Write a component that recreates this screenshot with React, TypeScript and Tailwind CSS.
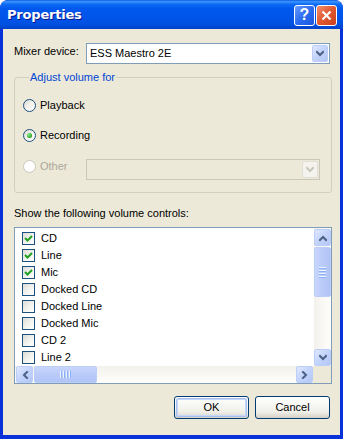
import React from "react";

const Chevron = ({ dir, color = "#4d6185" }: { dir: "up" | "down" | "left" | "right"; color?: string }) => {
  const pts: Record<string, string> = {
    down: "1,2 4,5 7,2",
    up: "1,6 4,3 7,6",
    left: "6,1 3,4 6,7",
    right: "2,1 5,4 2,7",
  };
  return (
    <svg width="8" height="8" viewBox="0 0 8 8">
      <polyline points={pts[dir]} fill="none" stroke={color} strokeWidth="2" strokeLinecap="square" />
    </svg>
  );
};

const ScrollBtn = ({ dir, w = 17, h = 17 }: { dir: "up" | "down" | "left" | "right"; w?: number; h?: number }) => (
  <div
    className="flex items-center justify-center rounded-[2px] border border-[#bccdf7] bg-[linear-gradient(135deg,#dfe8fe,#c2d3fc_50%,#b4c8f6)] shrink-0"
    style={{ width: w, height: h }}
  >
    <Chevron dir={dir} />
  </div>
);

const ComboBtn = ({ disabled }: { disabled?: boolean }) => (
  <div
    className={
      disabled
        ? "w-[16px] h-[17px] rounded-[2px] border border-[#e2e0d6] bg-[#f4f3ee] flex items-center justify-center"
        : "w-[16px] h-[17px] rounded-[2px] border border-[#bccdf7] bg-[linear-gradient(135deg,#dfe8fe,#c2d3fc_50%,#b4c8f6)] flex items-center justify-center"
    }
  >
    <Chevron dir="down" color={disabled ? "#c9c7ba" : "#4d6185"} />
  </div>
);

const Radio = ({ checked, disabled }: { checked?: boolean; disabled?: boolean }) => (
  <div
    className={
      disabled
        ? "w-[13px] h-[13px] rounded-full border border-[#cac8bb] bg-white flex items-center justify-center shrink-0"
        : "w-[13px] h-[13px] rounded-full border border-[#1c5180] bg-[linear-gradient(135deg,#dcd9cf,#f4f3ee_50%,#ffffff)] flex items-center justify-center shrink-0"
    }
  >
    {checked && <div className="w-[5px] h-[5px] rounded-full bg-[radial-gradient(circle_at_35%_35%,#8ef08e,#21a121_70%)]" />}
  </div>
);

const Check = ({ checked }: { checked?: boolean }) => (
  <div className="w-[13px] h-[13px] border border-[#1c5180] bg-[linear-gradient(135deg,#dcdcd7,#f5f5f2_60%,#ffffff)] flex items-center justify-center shrink-0">
    {checked && (
      <svg width="9" height="9" viewBox="0 0 9 9">
        <polyline points="1,4 3.5,6.5 8,2" fill="none" stroke="#21a121" strokeWidth="2" />
      </svg>
    )}
  </div>
);

const items: [string, boolean][] = [
  ["CD", true],
  ["Line", true],
  ["Mic", true],
  ["Docked CD", false],
  ["Docked Line", false],
  ["Docked Mic", false],
  ["CD 2", false],
  ["Line 2", false],
];

const Grip = ({ vertical }: { vertical?: boolean }) => (
  <div className={vertical ? "flex flex-col gap-[1px]" : "flex flex-row gap-[1px]"}>
    {[0, 1, 2, 3].map((i) => (
      <div key={i} className={vertical ? "w-[7px] h-[1px] bg-[#eef4fe] border-b border-[#8cb0f8] box-content" : "h-[7px] w-[1px] bg-[#eef4fe] border-r border-[#8cb0f8] box-content"} />
    ))}
  </div>
);

export default function App() {
  return (
    <div
      className="w-[343px] h-[439px] flex flex-col bg-[#0831d9] rounded-t-[8px] overflow-hidden text-[11px] text-black"
      style={{ fontFamily: '"Liberation Sans", Arial, sans-serif' }}
    >
      {/* Title bar */}
      <div className="h-[29px] shrink-0 flex items-center pl-[7px] pr-[6px] rounded-t-[8px] bg-[linear-gradient(to_bottom,#0a5ee0_0%,#3d95ff_6%,#0d6cf5_14%,#0058ee_30%,#0054e9_60%,#0050e0_85%,#0040c8_100%)]">
        <div
          className="flex-1 text-white font-bold text-[13px] [text-shadow:1px_1px_0_#0a1890]"
          style={{ fontFamily: '"DejaVu Sans", "Liberation Sans", sans-serif', letterSpacing: "-0.2px" }}
        >
          Properties
        </div>
        <div className="flex gap-[1px] mt-[1px]">
          <div className="w-[21px] h-[21px] rounded-[3px] border border-white bg-[linear-gradient(135deg,#6b9cff,#2a6cf0_50%,#1a56e0)] flex items-center justify-center text-white font-bold text-[16px] leading-none">
            ?
          </div>
          <div className="w-[21px] h-[21px] rounded-[3px] border border-white bg-[linear-gradient(135deg,#f0906e,#e0582e_50%,#c8401c)] flex items-center justify-center">
            <svg width="11" height="11" viewBox="0 0 11 11">
              <path d="M1.5 1.5 L9.5 9.5 M9.5 1.5 L1.5 9.5" stroke="white" strokeWidth="2.2" />
            </svg>
          </div>
        </div>
      </div>

      {/* Body */}
      <div className="flex-1 mx-[3px] mb-[4px] bg-[#ece9d8] pl-[11px] pr-[8px] flex flex-col">
        {/* Mixer row */}
        <div className="flex items-center mt-[14px] h-[21px]">
          <div className="w-[72px] -mt-[4px]">Mixer device:</div>
          <div className="flex-1 mr-[2px] h-[21px] bg-white border border-[#7f9db9] flex items-center pl-[3px] pr-[1px]">
            <div className="flex-1">ESS Maestro 2E</div>
            <ComboBtn />
          </div>
        </div>

        {/* Group */}
        <fieldset className="mt-[7px] border border-[#d0d0bf] rounded-[3px] pl-[8px] pr-[11px] pb-[12px]">
          <legend className="ml-[6px] px-[1px] text-[#0046d5] leading-[13px]">Adjust volume for</legend>
          <div className="flex flex-col gap-[17px] pt-[15px]">
            <div className="flex items-center gap-[4px] h-[13px]">
              <Radio />
              <span>Playback</span>
            </div>
            <div className="flex items-center gap-[4px] h-[13px]">
              <Radio checked />
              <span>Recording</span>
            </div>
            <div className="flex items-start h-[21px]">
              <div className="flex items-center gap-[4px] w-[63px] mt-[1px] h-[13px]">
                <Radio disabled />
                <span className="text-[#aca899]">Other</span>
              </div>
              <div className="flex-1 h-[21px] border border-[#c9c7ba] flex items-center justify-end pr-[1px]">
                <ComboBtn disabled />
              </div>
            </div>
          </div>
        </fieldset>

        <div className="mt-[14px] leading-[13px]">Show the following volume controls:</div>

        {/* List box */}
        <div className="mt-[7px] h-[157px] border border-[#7f9db9] bg-white flex flex-col overflow-hidden">
          <div className="flex flex-1 min-h-0">
            <div className="flex-1 overflow-hidden pt-[2px]">
              {items.map(([name, c]) => (
                <div key={name} className="h-[17px] flex items-center pl-[7px] gap-[6px]">
                  <Check checked={c} />
                  <span>{name}</span>
                </div>
              ))}
            </div>
            <div className="w-[17px] flex flex-col bg-[linear-gradient(to_right,#f3f1ec,#fefefb)] pt-[1px]">
              <ScrollBtn dir="up" w={17} h={17} />
              <div className="mt-[1px] h-[50px] rounded-[2px] border border-[#bccdf7] bg-[linear-gradient(to_right,#c8d6fb,#bacbfa_50%,#b0c4f6)] flex items-center justify-center">
                <Grip vertical />
              </div>
              <div className="flex-1" />
              <ScrollBtn dir="down" w={17} h={17} />
            </div>
          </div>
          <div className="h-[17px] flex shrink-0">
            <div className="flex-1 flex bg-[linear-gradient(to_bottom,#f3f1ec,#fefefb)] pl-[1px]">
              <ScrollBtn dir="left" w={17} h={17} />
              <div className="ml-[1px] w-[63px] h-[17px] rounded-[2px] border border-[#bccdf7] bg-[linear-gradient(to_bottom,#c8d6fb,#bacbfa_50%,#b0c4f6)] flex items-center justify-center">
                <Grip />
              </div>
              <div className="flex-1" />
              <ScrollBtn dir="right" w={17} h={17} />
            </div>
            <div className="w-[18px] bg-[#ece9d8]" />
          </div>
        </div>

        {/* Buttons */}
        <div className="mt-[12px] flex justify-end gap-[6px] mr-[2px]">
          <div className="w-[75px] h-[23px] rounded-[3px] border border-[#003c74] bg-[linear-gradient(to_bottom,#ffffff,#f0f0ea_70%,#d6d0c5)] p-[1px]">
            <div className="w-full h-full rounded-[2px] border border-[#a8c0f0] shadow-[inset_0_0_0_1px_#c6d7fa] flex items-center justify-center">
              OK
            </div>
          </div>
          <div className="w-[75px] h-[23px] rounded-[3px] border border-[#003c74] bg-[linear-gradient(to_bottom,#ffffff,#f0f0ea_70%,#d6d0c5)] flex items-center justify-center">
            Cancel
          </div>
        </div>
      </div>
    </div>
  );
}
